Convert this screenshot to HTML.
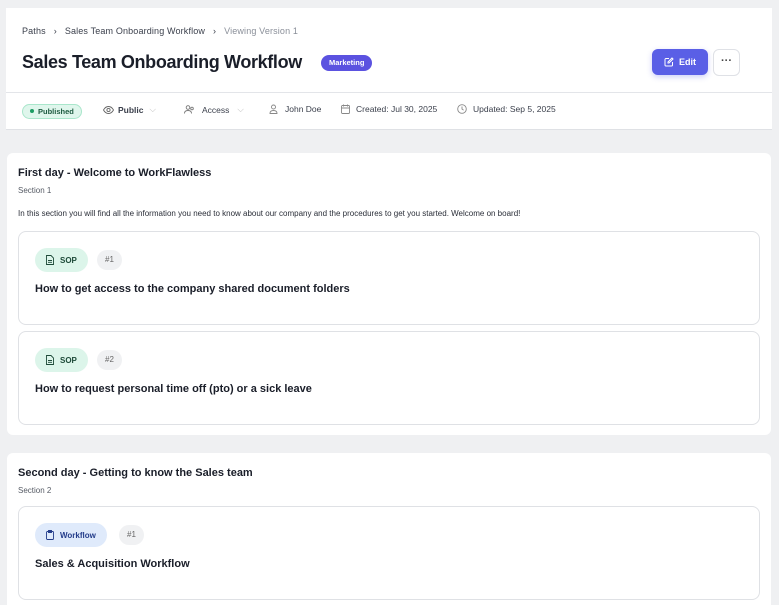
<!DOCTYPE html>
<html><head><meta charset="utf-8"><style>
*{box-sizing:border-box;margin:0;padding:0}
html,body{width:779px;height:605px;overflow:hidden}
body{background:#eff0f2;font-family:"Liberation Sans",sans-serif;color:#1f2330;position:relative}
.abs{position:absolute}
.hdr{left:6px;top:8px;width:766px;height:122px;background:#fff;border-bottom:1px solid #dfe1e5}
.crumb{top:26px;left:22px;font-size:9px;color:#3a3f4b;white-space:nowrap;letter-spacing:0.15px}
.crumb .g{color:#8a8f99}
h1{position:absolute;left:22px;top:52px;font-size:18px;font-weight:bold;color:#1a1e29;letter-spacing:-0.35px;white-space:nowrap}
.tag{left:321px;top:55px;height:16px;padding:0 8px;background:#5b52e0;color:#fff;border-radius:8px;font-size:7.5px;font-weight:bold;line-height:16px}
.edit{left:652px;top:49px;width:56px;height:26px;background:#5a5fe6;border-radius:6px;color:#fff;font-size:9px;font-weight:bold;display:flex;align-items:center;justify-content:center;gap:5px;box-shadow:0 2px 6px rgba(90,95,230,.3)}
.more{left:713px;top:49px;width:27px;height:27px;border:1px solid #dfe1e6;border-radius:6px;text-align:center;line-height:22px;font-size:11px;color:#444;font-weight:bold}
.line{left:6px;top:92px;width:766px;height:1px;background:#e3e5e9}
.meta{top:104px;font-size:8.5px;color:#3a3f4b;display:flex;align-items:center;gap:4px;white-space:nowrap}
.pub{left:22px;top:104px;height:15px;padding:0 7px;background:#dff6ec;border:1px solid #a9e6cb;border-radius:8px;font-size:7.5px;font-weight:bold;color:#1d5a40;line-height:13px}
.pub:before{content:"";display:inline-block;width:4px;height:4px;border-radius:50%;background:#1c9c63;margin-right:4px;vertical-align:1px}
.card{background:#fff;border-radius:6px;left:7px;width:764px}
.sec-t{font-size:11px;font-weight:bold;color:#1a1e29}
.sec-s{font-size:8px;color:#555a64}
.item{left:18px;width:742px;border:1px solid #dfe1e5;border-radius:8px;background:#fff}
.pill{position:absolute;top:16px;height:24px;border-radius:12px;font-size:8px;font-weight:bold;display:flex;align-items:center;gap:6px;padding:0 11px}
.sop{left:16px;background:#dcf5ea;color:#1d4a38}
.wf{left:16px;background:#dfeafb;color:#233c8a}
.num{position:absolute;top:18px;height:20px;border-radius:10px;background:#f0f1f3;color:#666;font-size:8px;padding:0 8px;line-height:20px}
.it{position:absolute;left:16px;font-size:11px;font-weight:bold;color:#1a1e29}
</style></head><body>
<div class="abs hdr"></div>
<div class="abs crumb">Paths &nbsp;&nbsp;›&nbsp;&nbsp; Sales Team Onboarding Workflow &nbsp;&nbsp;›&nbsp;&nbsp; <span class="g">Viewing Version 1</span></div>
<h1>Sales Team Onboarding Workflow</h1>
<div class="abs tag">Marketing</div>
<div class="abs edit"><svg width="10" height="10" viewBox="0 0 10 10" fill="none" stroke="#fff" stroke-width="1"><path d="M5 1.5H2a1 1 0 0 0-1 1v5.5a1 1 0 0 0 1 1h5.5a1 1 0 0 0 1-1V5"/><path d="M8 1l1 1-4 4H4V5z"/></svg>Edit</div>
<div class="abs more">···</div>
<div class="abs line"></div>
<div class="abs pub">Published</div>
<div class="abs meta" style="left:103px"><svg width="11" height="8" viewBox="0 0 11 8" fill="none" stroke="#666" stroke-width=".9"><path d="M.5 4C2 1.3 4 .5 5.5.5S9 1.3 10.5 4C9 6.7 7 7.5 5.5 7.5S2 6.7.5 4z"/><circle cx="5.5" cy="4" r="1.6"/></svg><b>Public</b><span style="color:#bbb;margin-left:2px">⌵</span></div>
<div class="abs meta" style="left:184px"><svg width="11" height="9" viewBox="0 0 11 9" fill="none" stroke="#777" stroke-width=".9"><circle cx="4" cy="2.5" r="1.8"/><path d="M.5 8.5c0-2 1.5-3 3.5-3s3.5 1 3.5 3"/><circle cx="8" cy="3.5" r="1.3"/></svg><span style="margin-left:3px">Access</span><span style="color:#bbb;margin-left:4px">⌵</span></div>
<div class="abs meta" style="left:269px"><svg width="9" height="10" viewBox="0 0 9 10" fill="none" stroke="#888" stroke-width=".9"><circle cx="4.5" cy="3" r="2"/><path d="M1 9.5c0-2 1.5-3 3.5-3S8 7.5 8 9.5z"/></svg><span style="margin-left:3px">John Doe</span></div>
<div class="abs meta" style="left:341px"><svg width="9" height="10" viewBox="0 0 9 10" fill="none" stroke="#888" stroke-width=".9"><rect x=".5" y="1.5" width="8" height="8" rx="1"/><path d="M.5 4h8M2.5 .5v2M6.5 .5v2"/></svg><span style="margin-left:2px">Created: Jul 30, 2025</span></div>
<div class="abs meta" style="left:457px"><svg width="10" height="10" viewBox="0 0 10 10" fill="none" stroke="#888" stroke-width=".9"><circle cx="5" cy="5" r="4.3"/><path d="M5 2.5V5l1.6 1.2"/></svg><span style="margin-left:2px">Updated: Sep 5, 2025</span></div>

<div class="abs card" style="top:153px;height:282px"></div>
<div class="abs sec-t" style="left:18px;top:167px">First day - Welcome to WorkFlawless</div>
<div class="abs sec-s" style="left:18px;top:186px">Section 1</div>
<div class="abs sec-s" style="left:18px;top:209px;color:#2a2e38">In this section you will find all the information you need to know about our company and the procedures to get you started. Welcome on board!</div>
<div class="abs item" style="top:231px;height:94px"><div class="pill sop"><svg width="8" height="10" viewBox="0 0 8 10" fill="none" stroke="#1d4a38" stroke-width=".9"><path d="M.5.5h4.5l2.5 2.5v6.5h-7z"/><path d="M2 5.5h4M2 7.3h4"/></svg>SOP</div><div class="num" style="left:78px">#1</div><div class="it" style="top:51px">How to get access to the company shared document folders</div></div>
<div class="abs item" style="top:331px;height:94px"><div class="pill sop"><svg width="8" height="10" viewBox="0 0 8 10" fill="none" stroke="#1d4a38" stroke-width=".9"><path d="M.5.5h4.5l2.5 2.5v6.5h-7z"/><path d="M2 5.5h4M2 7.3h4"/></svg>SOP</div><div class="num" style="left:78px">#2</div><div class="it" style="top:51px">How to request personal time off (pto) or a sick leave</div></div>

<div class="abs card" style="top:453px;height:160px"></div>
<div class="abs sec-t" style="left:18px;top:467px">Second day - Getting to know the Sales team</div>
<div class="abs sec-s" style="left:18px;top:486px">Section 2</div>
<div class="abs item" style="top:506px;height:94px"><div class="pill wf"><svg width="8" height="10" viewBox="0 0 8 10" fill="none" stroke="#233c8a" stroke-width=".9"><rect x=".5" y="1.5" width="7" height="8" rx="1"/><path d="M2.5.5h3v2h-3z"/></svg>Workflow</div><div class="num" style="left:100px">#1</div><div class="it" style="top:51px">Sales &amp; Acquisition Workflow</div></div>
</body></html>
